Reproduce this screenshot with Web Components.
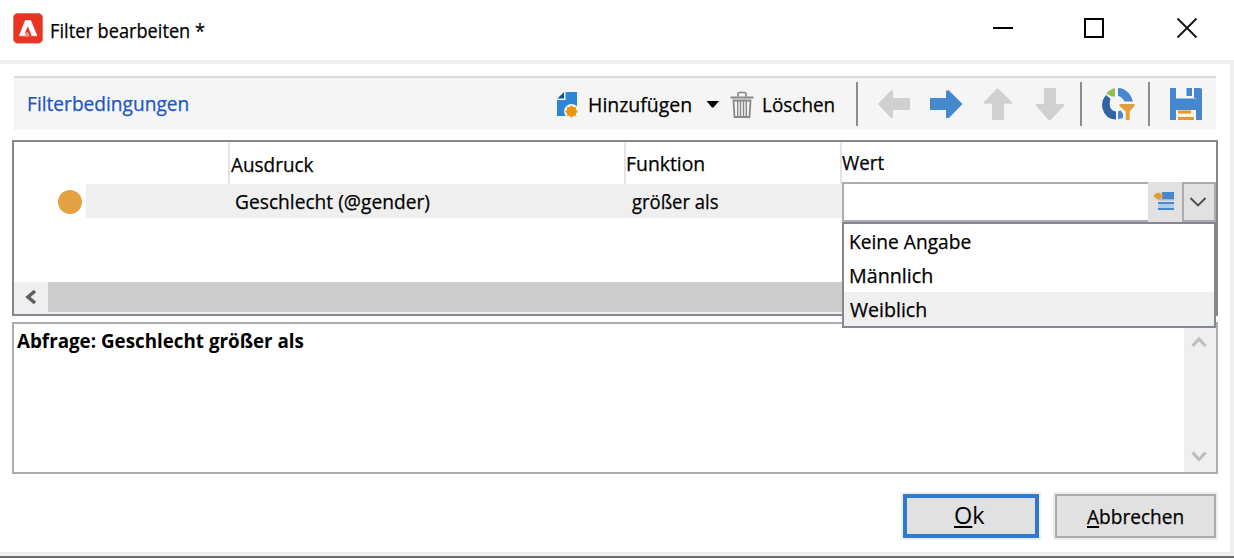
<!DOCTYPE html>
<html lang="de">
<head>
<meta charset="utf-8">
<title>Filter bearbeiten</title>
<style>
html, body { margin: 0; background: #fff; }
body { width: 1234px; height: 558px; overflow: hidden; font: 20px/28px "Open Sans", "Noto Sans", sans-serif; color: #000; }
</style>
</head>
<body>
<filter-dialog></filter-dialog>
<script>
const define = (name, html, setup) => {
  const tpl = document.createElement('template');
  tpl.innerHTML = html;
  customElements.define(name, class extends HTMLElement {
    constructor() {
      super();
      this.attachShadow({ mode: 'open' }).append(tpl.content.cloneNode(true));
    }
    connectedCallback() { if (setup) setup(this, this.shadowRoot); }
  });
};

// Text label whose glyphs span exactly the width given in the "w" attribute.
define('fit-label', `
<style>
:host { display: block; flex: none; height: 28px; white-space: nowrap; }
span { display: inline-block; transform-origin: 0 0; line-height: 28px; -webkit-text-stroke: var(--stroke, .25px); }
</style><span><slot></slot></span>`, (el, root) => {
  const w = +el.getAttribute('w');
  const cs = getComputedStyle(el);
  const ctx = document.createElement('canvas').getContext('2d');
  ctx.font = `${cs.fontWeight} ${cs.fontSize} ${cs.fontFamily}`;
  const m = ctx.measureText(el.textContent.trim());
  const k = w / (m.actualBoundingBoxLeft + m.actualBoundingBoxRight);
  el.style.width = w + 'px';
  root.querySelector('span').style.transform = `translate(${m.actualBoundingBoxLeft * k}px, 1px) scaleX(${k})`;
});

define('title-bar', `
<style>
:host { display: flex; box-sizing: border-box; height: 64px; border-bottom: 4px solid #efefef; align-items: flex-start; padding: 13px 36px 0 13px; }
svg { display: block; flex: none; }
.title { margin: 3px auto 0 8.400px; }
.min { margin: 4px 69px 0 0; } .max { margin: 4px 71px 0 0; } .close { margin-top: 4px; }
</style>
<svg width="30" height="31" viewBox="0 0 30 31"><rect x=".3" y=".3" width="29.400" height="30" rx="4.500" fill="#e93323" stroke="#dc8178" stroke-width=".6"/><path d="M12.300 7.500h5.400l6.300 15.300H6.300z" fill="#fff" stroke="#fff" stroke-width=".6" stroke-linejoin="round"/><path d="M14.900 13.200l3.900 10.200h-2.400l-1.500-3.600h-3z" fill="#e93323"/><path d="M11.900 19.800h3l1.400 3.600h-3.800z" fill="#f4958c"/></svg>
<fit-label class="title" w="154">Filter bearbeiten *</fit-label>
<svg class="min" width="22" height="22"><path d="M1 11h20" stroke="#000" stroke-width="2"/></svg>
<svg class="max" width="22" height="22"><rect x="2" y="2" width="18" height="18" fill="none" stroke="#000" stroke-width="2"/></svg>
<svg class="close" width="22" height="22"><path d="M1.500 1.500l19 19M20.500 1.500l-19 19" stroke="#111" stroke-width="1.800"/></svg>
`);

define('tool-bar', `
<style>
:host { display: flex; box-sizing: border-box; width: 1202px; height: 54px; margin: 12px 0 10px 14px; background: #f5f5f5; border-top: 2px solid #d9d9d9; align-items: flex-start; padding-left: 14px; }
svg { display: block; flex: none; }
.t { margin-top: 12px; }
i { flex: none; width: 2px; height: 44px; margin-top: 4px; background: #8b8b8b; }
</style>
<fit-label class="t" w="160" style="color:#2054c4;margin-top:11px;margin-right:368px">Filterbedingungen</fit-label>
<svg width="24" height="28" style="margin-top:13px;margin-right:9px"><path d="M9.500 1H21v14H1V9h8.500z" fill="#2b87d3"/><path d="M1 15h14v10H1z" fill="#2b87d3"/><path d="M1.500 7.500L8 1v6.500z" fill="#164f94"/><circle cx="15.500" cy="20.500" r="7.400" fill="#f5f5f5"/><circle cx="15.500" cy="20.500" r="5" fill="#e9950e"/><path d="M15.500 14.500v12M9.500 20.500h12M11.300 16.300l8.400 8.400M19.700 16.300l-8.400 8.400" stroke="#e9950e" stroke-width="1.800"/></svg>
<fit-label class="t" w="102">Hinzufügen</fit-label>
<svg width="14" height="10" style="margin-top:22px;margin-left:15px"><path d="M.5 1h12.500L7.500 7.500H6z" fill="#000"/></svg>
<svg width="24" height="28" viewBox="0 0 24 28" style="margin:13px 9px 0 10px" fill="none" stroke="#888"><path d="M.5 6.500h23" stroke-width="2"/><path d="M8 5.500V3q0-1.500 1.500-1.500h5Q16 1.500 16 3v2.500" stroke-width="1.700"/><path d="M3.500 9.500h17l-1 16.500h-15z" stroke-width="1.800"/><path d="M7.700 10v15M10.500 10v15M13.500 10v15M16.300 10v15" stroke-width="1.400"/></svg>
<fit-label class="t" w="71">Löschen</fit-label>
<i style="margin-left:22px"></i>
<svg width="34" height="30" style="margin:11px 0 0 19px"><path d="M1 15L14 1.500h2V9h17v12H16v8h-2z" fill="#d0d0d0"/></svg>
<svg width="34" height="30" style="margin:11px 0 0 19px"><path d="M0 9h16V1.500h3L32.500 15 19 29h-3v-8H0z" fill="#4688cd"/></svg>
<svg width="30" height="34" style="margin:9px 0 0 19px"><path d="M14.500 1L29 15v1.800h-8V33H9V16.800H1V15z" fill="#d0d0d0"/></svg>
<svg width="30" height="34" style="margin:9px 0 0 22px"><path d="M9 1h12v16h8v2L15.500 33h-2L1 19v-2h8z" fill="#d0d0d0"/></svg>
<i style="margin-left:15px"></i>
<svg width="34" height="34" style="margin:9px 0 0 19px"><path d="M14 1v8.500h-3.500L5.300 6.500Q9 2 14 1z" fill="#95c14f"/><path d="M17 1q11 .5 15 13.500h-8.500Q21 9.500 17 9z" fill="#4688cd"/><path d="M5 8l4.500 3.800Q6.500 23.500 15 24.500V32.500Q4 32 1.500 21.500-.2 14 5 8z" fill="#3164a5"/><path d="M17 24.200l2.500-.8 2.500 3v4.500l-5 1.300z" fill="#4688cd"/><path d="M18.500 17h15v2L28.700 24.500V33h-4v-8.500L18.500 19z" fill="#e4a03d"/></svg>
<i style="margin-left:13px"></i>
<svg width="32" height="32" style="margin:10px 0 0 20px"><path d="M0 0h6v10.500h20V0h4q2 0 2 2v30h-6V22H6v10H0z" fill="#4688cd"/><path d="M16.500 0H22v8h-5.500z" fill="#4688cd"/><path d="M24 0h2v10h-2z" fill="#4688cd"/><path d="M8 22h16v10H8z" fill="#fff1dc"/><path d="M8 24h13M8 30.500h16" stroke="#e4982f" stroke-width="3"/></svg>
`);

define('value-editor', `
<style>
:host { position: absolute; z-index: 2; left: 828px; top: 40px; width: 374px; height: 146px; }
.field { display: flex; height: 40px; }
.in { box-sizing: border-box; width: 306px; border: 2px solid #ababb0; border-right: 0; background: #fff; }
.pick { width: 34px; background: #e1e1e1; }
.drop { box-sizing: border-box; width: 34px; border: 2px solid #ababab; background: #e1e1e1; }
.list { box-sizing: border-box; height: 106px; border: 2px solid #828790; background: #fff; }
.o { height: 31px; padding: 3px 0 0 6px; }
.sel { background: #efefef; }
svg { display: block; }
</style>
<div class="field"><div class="in"></div>
<div class="pick"><svg width="34" height="40"><path d="M14 10h12v7H14z" fill="#4688cd"/><path d="M10 17h16v1.500H10z" fill="#9bbce2"/><path d="M10 20h16v2H10zM10 26h16v2H10z" fill="#4688cd"/><path d="M10 22h16v4H10z" fill="#b5cbe5"/><circle cx="10.500" cy="14" r="3.600" fill="#e5b86f"/><path d="M6 14h9M10 11v6" stroke="#e19b35" stroke-width="3"/></svg></div>
<div class="drop"><svg width="30" height="36"><path d="M6.500 14l7.500 7.500 7.500-7.500" fill="none" stroke="#4b4b4b" stroke-width="1.900"/></svg></div></div>
<div class="list"><div class="o"><fit-label w="121">Keine Angabe</fit-label></div><div class="o"><fit-label w="82">Männlich</fit-label></div><div class="o sel"><fit-label w="76">Weiblich</fit-label></div></div>
`);

define('condition-grid', `
<style>
:host { display: flex; flex-direction: column; position: relative; box-sizing: border-box; width: 1206px; height: 176px; margin-left: 12px; border: 2px solid #828790; }
.head { display: flex; height: 42px; }
.head > div { box-sizing: border-box; height: 42px; border-right: 2px solid #e3e3e3; }
.row { display: flex; height: 34px; }
.dot { width: 24px; height: 24px; border-radius: 50%; background: #e4a141; margin: 6px 4px 0 44px; flex: none; }
.cells { display: flex; width: 756px; background: #efefef; padding-top: 3px; height: 31px; }
.bar { margin-top: auto; height: 32px; display: flex; background: #efefef; }
.thumb { width: 1168px; height: 30px; background: #cdcdcd; }
</style>
<div class="head">
<div style="width:216px"></div>
<div style="width:396px;padding:8px 0 0 1px"><fit-label w="83">Ausdruck</fit-label></div>
<div style="width:216px;padding:7px 0 0 1px"><fit-label w="77">Funktion</fit-label></div>
<div style="flex:1;border:0;padding-top:6px"><fit-label w="42">Wert</fit-label></div>
</div>
<div class="row"><div class="dot"></div><div class="cells">
<fit-label w="194" style="margin-left:150px">Geschlecht (@gender)</fit-label>
<fit-label w="86" style="margin-left:202px">größer als</fit-label></div></div>
<div class="bar"><svg width="34" height="30"><path d="M21 9l-7 6 7 6" fill="none" stroke="#606060" stroke-width="3.600"/></svg><div class="thumb"></div></div>
<value-editor></value-editor>
`);

define('query-box', `
<style>
:host { display: flex; justify-content: space-between; box-sizing: border-box; width: 1206px; height: 152px; margin: 6px 0 18px 12px; border: 2px solid #ababb0; }
.q { font-weight: bold; margin: 2px 0 0 3.400px; --stroke: 0; }
.bar { width: 32px; background: #efefef; display: flex; flex-direction: column; justify-content: space-between; }
svg { display: block; }
</style>
<fit-label class="q" w="287">Abfrage: Geschlecht größer als</fit-label>
<div class="bar"><svg width="32" height="30"><path d="M8.500 22l6.500-7 6.500 7" fill="none" stroke="#bdbdbd" stroke-width="3.200"/></svg>
<svg width="32" height="30"><path d="M8.500 10.500l6.500 7 6.500-7" fill="none" stroke="#bdbdbd" stroke-width="3.200"/></svg></div>
`);

define('push-button', `
<style>
:host { display: flex; justify-content: flex-start; box-sizing: border-box; height: 44px; outline: 2px solid #efefef; border: 2px solid #ababab; background: #e1e1e1; }
:host([primary]) { border: 4px solid #2f7ad1; font-size: 24px; --stroke: 0; }
</style><slot></slot>
`);

define('filter-dialog', `
<style>
:host { display: block; box-sizing: border-box; width: 1234px; height: 558px; overflow: hidden; border-bottom: 2px solid #6f6f6f; background: #fff; }
.body { box-sizing: border-box; display: flow-root; height: 492px; border-right: 4px solid #efefef; border-bottom: 4px solid #efefef; }
.foot { display: flex; gap: 16px; justify-content: flex-end; padding: 2px 14px 0 0; }
u { text-decoration-thickness: 2px; text-underline-offset: 2px; text-decoration-skip-ink: none; }
</style>
<title-bar></title-bar>
<div class="body">
<tool-bar></tool-bar>
<condition-grid></condition-grid>
<query-box></query-box>
<div class="foot">
<push-button primary style="width:136px"><fit-label w="30" style="margin:2px 0 0 48px"><u>O</u>k</fit-label></push-button>
<push-button style="width:161px"><fit-label w="96" style="margin:6px 0 0 30px"><u>A</u>bbrechen</fit-label></push-button>
</div>
</div>
`);
</script>
</body>
</html>
